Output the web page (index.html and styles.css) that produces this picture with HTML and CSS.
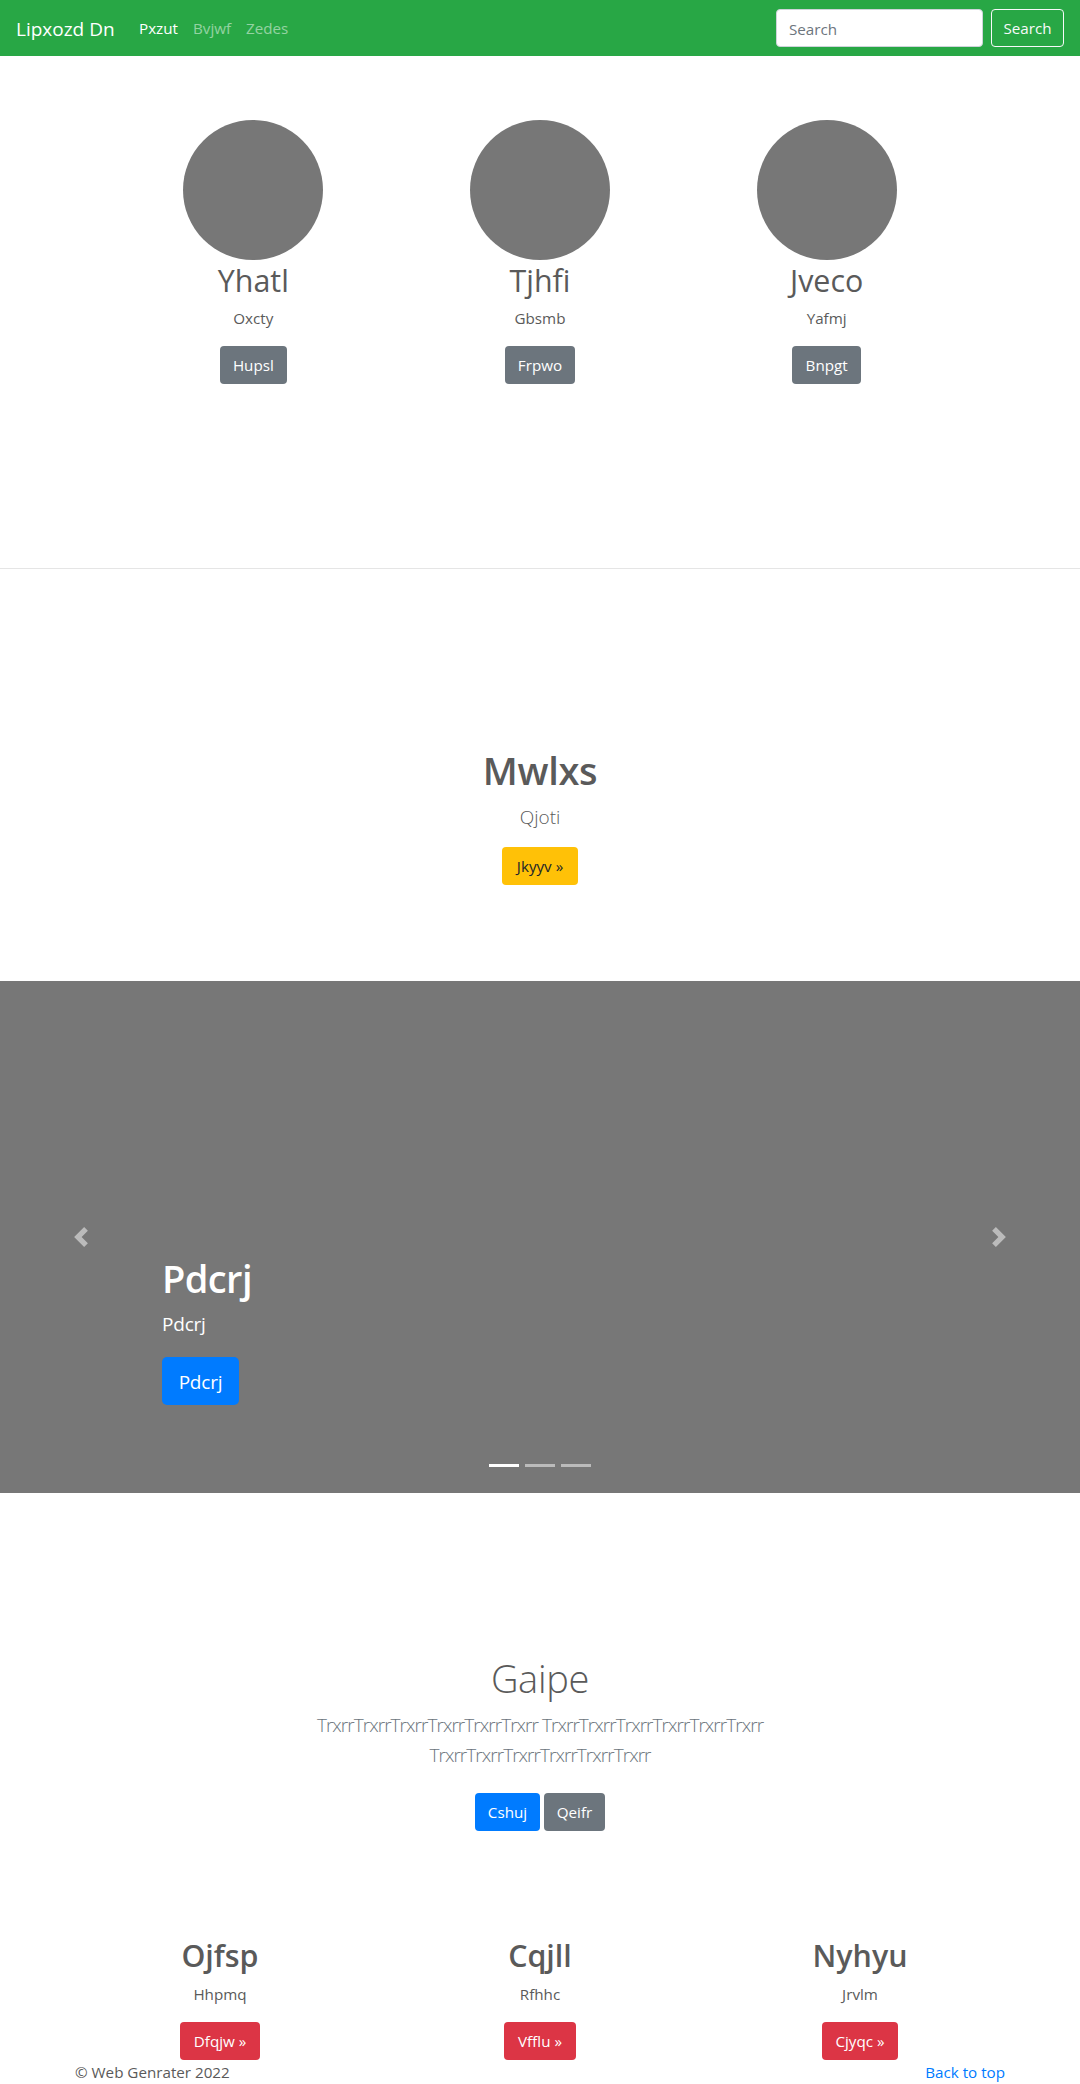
FILE: index.html
```html
<!DOCTYPE html>
<html lang="en">
<head>
<meta charset="utf-8">
<title>Lipxozd Dn</title>
<link rel="stylesheet" href="styles.css">
</head>
<body>
<header class="navbar">
  <a class="brand" href="#">Lipxozd Dn</a>
  <nav class="links"><a class="active" href="#">Pxzut</a><a class="second" href="#">Bvjwf</a><a href="#">Zedes</a></nav>
  <form class="search"><input type="text" placeholder="Search" aria-label="Search"><button class="btn outline" type="button">Search</button></form>
</header>
<main>
  <section class="team">
    <div class="col"><div class="avatar"></div><h2>Yhatl</h2><p>Oxcty</p><a class="btn gray w67" href="#">Hupsl</a></div>
    <div class="col"><div class="avatar"></div><h2>Tjhfi</h2><p>Gbsmb</p><a class="btn gray w70" href="#">Frpwo</a></div>
    <div class="col"><div class="avatar"></div><h2>Jveco</h2><p>Yafmj</p><a class="btn gray w69" href="#">Bnpgt</a></div>
  </section>
  <hr>
  <section class="intro">
    <h1>Mwlxs</h1>
    <p class="lead">Qjoti</p>
    <a class="btn yellow w76" href="#">Jkyyv »</a>
  </section>
  <section class="carousel">
    <svg class="arrow prev" viewBox="0 0 8 8" fill="#fff"><path d="M5.25 0l-4 4 4 4 1.5-1.5-2.5-2.5 2.5-2.5-1.5-1.5z"/></svg>
    <div class="caption">
      <h1>Pdcrj</h1>
      <p>Pdcrj</p>
      <a class="btn blue large" href="#">Pdcrj</a>
    </div>
    <svg class="arrow next" viewBox="0 0 8 8" fill="#fff"><path d="M2.75 0l-1.5 1.5 2.5 2.5-2.5 2.5 1.5 1.5 4-4-4-4z"/></svg>
    <div class="indicators"><i class="on"></i><i></i><i></i></div>
  </section>
  <section class="album">
    <h1>Gaipe</h1>
    <p class="lead">TrxrrTrxrrTrxrrTrxrrTrxrrTrxrr TrxrrTrxrrTrxrrTrxrrTrxrrTrxrr<br>TrxrrTrxrrTrxrrTrxrrTrxrrTrxrr</p>
    <div class="actions"><a class="btn blue w65" href="#">Cshuj</a><a class="btn gray w61" href="#">Qeifr</a></div>
  </section>
  <section class="features">
    <div class="col"><h2>Ojfsp</h2><p>Hhpmq</p><a class="btn red w80" href="#">Dfqjw »</a></div>
    <div class="col"><h2>Cqjll</h2><p>Rfhhc</p><a class="btn red w72" href="#">Vfflu »</a></div>
    <div class="col"><h2>Nyhyu</h2><p>Jrvlm</p><a class="btn red w76" href="#">Cjyqc »</a></div>
  </section>
</main>
<footer><span>© Web Genrater 2022</span><a href="#">Back to top</a></footer>
</body>
</html>
```
FILE: styles.css
```css
* { box-sizing: border-box; }
body { margin: 0; background: #fff; color: #5a5a5a; font: 15.2px/24px "Segoe UI", "Open Sans", "Noto Sans", sans-serif; height: 2084px; overflow: hidden; }
a { text-decoration: none; color: #007bff; }
h1, h2, p { margin: 0; }
h1 { font-size: 38px; line-height: 53px; font-weight: 600; margin-bottom: 3px; letter-spacing: -.3px; }
h2 { font-size: 30.4px; line-height: 41px; margin-bottom: 6px; }
p { line-height: 25px; margin-bottom: 15px; }

.navbar { height: 56px; padding: 0 16px; display: flex; align-items: center; background: #28a745; }
.brand { width: 98px; padding-top: 1px; font-size: 19px; line-height: 30px; color: #fff; white-space: nowrap; }
.links { display: flex; margin-left: 25px; gap: 16px; }
.links a { color: rgba(255, 255, 255, .5); width: 42px; }
.links .active { color: #fff; width: 38px; }
.links .second { width: 37px; }
.search { margin-left: auto; display: flex; gap: 8px; }
.search input { width: 207px; height: 38px; padding: 2px 12px 0; border: 1px solid #ced4da; border-radius: 4px; font: inherit; background: #fff; }
.search input::placeholder { color: #6c757d; opacity: 1; }

.btn { display: inline-flex; justify-content: center; align-items: center; height: 38px; padding: 0; border: 1px solid transparent; border-radius: 4px; font: inherit; color: #fff; white-space: nowrap; }
.outline { width: 73px; border-color: #f8f9fa; background: transparent; color: #f8f9fa; }
.gray { background: #6c757d; }
.blue { background: #007bff; }
.red { background: #dc3545; }
.yellow { background: #ffc107; color: #212529; }
.large { width: 77px; height: 48px; padding-top: 2px; font-size: 19px; letter-spacing: -.2px; border-radius: 5px; }
.w61 { width: 61px; }
.w65 { width: 65px; }
.w67 { width: 67px; }
.w69 { width: 69px; }
.w70 { width: 70px; }
.w72 { width: 72px; }
.w76 { width: 76px; }
.w80 { width: 80px; }

.team { width: 860px; margin: 0 auto; padding-top: 64px; height: 512px; display: grid; grid-template-columns: repeat(3, 1fr); }
.col { display: flex; flex-direction: column; align-items: center; }
.avatar { width: 140px; height: 140px; border-radius: 50%; background: #777; }
.team h2 { font-weight: 400; margin-bottom: 5px; }
hr { margin: 0; border: 0; border-top: 1px solid rgba(0, 0, 0, .1); }
.intro { height: 412px; padding-top: 175px; display: flex; flex-direction: column; align-items: center; }
.lead { font-size: 19px; line-height: 30px; font-weight: 300; }
.intro .lead { margin: 2px 0 15px; color: #5a5a5a; }

.carousel { position: relative; height: 512px; background: #777; color: #fff; display: flex; align-items: center; justify-content: space-between; padding: 0 71px; }
.arrow { width: 20px; height: 20px; opacity: .5; }
.caption { flex: 1; margin-left: 71px; padding-top: 183px; }
.caption h1 { line-height: 51px; margin-bottom: 5px; letter-spacing: -.6px; }
.caption p { font-size: 19px; line-height: 30px; margin-bottom: 18px; letter-spacing: -.2px; }
.caption .btn { display: flex; }
.indicators { position: absolute; left: 0; right: 0; bottom: 26px; display: flex; justify-content: center; gap: 6px; }
.indicators i { width: 30px; height: 3px; background: #fff; opacity: .5; }
.indicators .on { opacity: 1; }

.album { height: 442px; padding-top: 159px; display: flex; flex-direction: column; align-items: center; text-align: center; }
.album h1 { font-weight: 300; }
.album .lead { color: #6c757d; margin: 2px 0 23px; letter-spacing: -.95px; white-space: nowrap; }
.actions { display: flex; gap: 4px; }
.features { width: 960px; margin: 0 auto; display: grid; grid-template-columns: repeat(3, 1fr); height: 125px; }
.features h2 { font-weight: 600; }
footer { display: flex; justify-content: space-between; padding: 0 75px; }
```
